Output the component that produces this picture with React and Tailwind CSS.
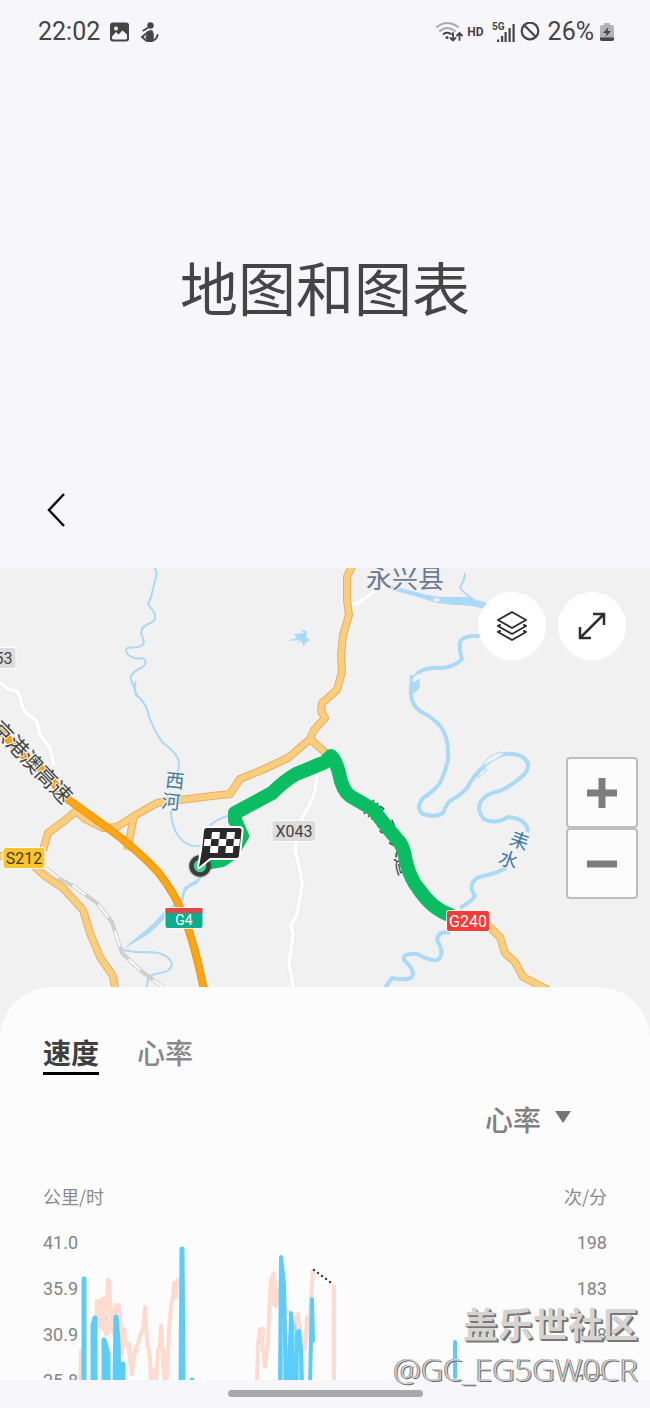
import React, { useState } from 'react';

const SPEED_TICKS = ['41.0', '35.9', '30.9', '25.8'];
const HEART_TICKS = ['198', '183', '168', '153'];

const ROADS = [
  'M353 564 L347 577 L347 600 L349 615 L343 635 L341 655 L342 672 L337 690 L322 703 L321 711 L325 718 L314 730 L310 739 L288 758 L262 770 L240 779 Q234 788 230 794 L212 796 L180 800 L157 803 L134 816 L117 827 L103 828 L85 819 L76 811 L63 822 L48 833 L43 850',
  'M310 739 L328 755',
  'M134 816 L130 837 L127 850',
  'M0 856 L12 856',
  'M34 866 L46 877 L63 888 L83 910 L90 933 L100 957 L113 976 L117 1000',
  'M486 924 L500 937 L505 953 L515 962 L523 977 L560 996',
];

const LANES = [
  'M0 682 L8 689 L17 691 L20 697 L22 706 L27 714 L36 720 L40 735 L50 748 L54 766',
  'M318 772 L314 795 L308 808 L300 822 L295 850 L300 870 L302 885 L297 915 L291 925 L293 935 L289 963 L294 992',
  'M350 605 L358 603 L367 597 L378 588 L386 585',
];

/* Thin streams, drawn with one stroke width */
const STREAMS = [
  'M154 568 Q158 570 156 577 L151 597 L148 604 L154 612 Q158 621 148 624 Q139 628 142 636 Q147 645 138 647 L127 648 Q124 652 130 656 Q136 660 143 658 Q149 663 141 668 Q129 673 131 680 L137 695 Q148 706 149 717 Q154 730 162 742 Q174 751 177 757 Q181 764 177 775',
  'M171 810 Q171 826 179 837 Q187 847 200 846',
  'M208 828 Q216 818 232 815',
  'M123 950 Q136 953 150 952 Q170 953 172 965 Q170 972 160 973 Q148 975 148 980 L146 990',
  'M465 573 Q465 580 460 587 Q462 592 473 599',
];

const RIVERS = [
  'M480 636 Q463 635 460 642 Q459 651 462 659 Q456 666 443 668 Q425 667 418 673 Q411 681 411 692 Q411 705 420 711 Q436 719 443 730 Q449 741 448 760 Q445 773 440 783 Q432 793 423 798 Q415 809 423 814 Q436 818 443 813 Q447 803 450 801 Q462 794 467 788 Q474 775 483 767 Q494 756 505 754 Q522 752 528 763 Q529 772 519 779 Q510 786 500 791 Q487 793 481 801 Q476 810 484 819 Q495 825 508 817 Q520 818 524 823 Q529 828 527 832',
  'M506 868 Q495 874 483 876 Q475 877 472 884 Q470 889 475 896 Q472 901 460 908',
  'M450 933 Q438 930 437 940 Q446 955 437 960 Q430 961 417 954 Q402 953 404 960 Q416 971 412 977 Q406 981 392 978 L385 988',
];

function StatusBar() {
  return (
    <div className="flex items-center justify-between h-16 pl-[38px] pr-9 text-[#454545]">
      <div className="flex items-center gap-2.5">
        <span className="font-[Roboto] text-[25px] leading-8">22:02</span>
        <svg className="w-5 h-5" viewBox="0 0 20 20" aria-hidden="true">
          <rect x="0" y="0.500" width="19" height="19" rx="3" fill="currentColor" />
          <circle cx="6" cy="6.500" r="2" fill="#f6f6fb" />
          <path d="M2 14.500 L6 10 L8.500 12.500 L12.500 8.500 L17 12.500 V16 Q17 17.500 15.500 17.500 H3.500 Q2 17.500 2 16 Z" fill="#f6f6fb" />
        </svg>
        <svg className="w-5 h-5" viewBox="0 0 20 20" aria-hidden="true">
          <circle cx="10.500" cy="3.500" r="3.200" fill="currentColor" />
          <path d="M7.500 9.500 Q10 7 12.500 8.500 Q14.500 12 13.500 18 Q10 20 6.500 18 L5.500 15.500 Z" fill="currentColor" />
          <path d="M8 10 L2 15 L6 18.500 Q10 20 13 18.500 Q17 17 17.500 13 M3.500 8.500 L7.500 6" fill="none" stroke="currentColor" strokeWidth="2" strokeLinecap="round" />
        </svg>
      </div>

      <div className="flex items-center">
        <svg className="w-7 h-6" viewBox="0 0 28 24" fill="none" strokeLinecap="round" aria-hidden="true">
          <path d="M2 7 Q12 -1 23 7" stroke="#a9a9ad" strokeWidth="2" />
          <path d="M5 11 Q12 5 20 11" stroke="#a9a9ad" strokeWidth="2" />
          <path d="M8.500 14 Q12 11.500 16 14" stroke="currentColor" strokeWidth="2" />
          <circle cx="12" cy="17.500" r="1.500" fill="currentColor" />
          <path d="M18 13 V20 M15.500 18 L18 20.500 L20.500 18 M24.500 20 V13 M22 15.500 L24.500 13 L27 15.500" stroke="currentColor" strokeWidth="1.800" />
        </svg>
        <span className="ml-1 font-[Roboto] text-xs font-bold">HD</span>
        <svg className="w-6 h-6 ml-2" viewBox="0 0 24 24" fill="currentColor" aria-hidden="true">
          <text x="0" y="10" fontFamily="Roboto" fontSize="10" fontWeight="700">5G</text>
          <path d="M5 19.500h2.200v2.500h-2.200z M9 16h2.200v6h-2.200z M12.500 12h2.200v10h-2.200z M16.500 8h2.200v14h-2.200z M20.500 4h2.200v18h-2.200z" />
        </svg>
        <svg className="w-5 h-5 ml-1" viewBox="0 0 20 20" fill="none" stroke="currentColor" strokeWidth="2.200" aria-hidden="true">
          <circle cx="10" cy="9" r="8.300" />
          <path d="M4 3 L16 15" />
        </svg>
        <span className="ml-2 font-[Roboto] text-[25px] leading-8">26%</span>
        <svg className="w-3.5 h-5 ml-1.5" viewBox="0 0 14 20" aria-hidden="true">
          <path d="M4 1 h6 v2 h2 q2 0 2 2 v12 q0 2 -2 2 h-10 q-2 0 -2 -2 v-12 q0 -2 2 -2 h2z" fill="#b4b4b8" />
          <path d="M0 15.500 h14 v1.500 q0 2 -2 2 h-10 q-2 0 -2 -2z" fill="currentColor" />
          <path d="M8.500 5 L3 11 H6.500 L5.500 15 L11 9 H7.500z" fill="currentColor" />
        </svg>
      </div>
    </div>
  );
}

/* Road number plate, centred on its point */
function Shield({ x, y, w, label, fill, color, cap }) {
  return (
    <g>
      <rect x={x - w / 2 - 1} y={y - 11} width={w + 2} height="22" rx="3" fill="#fff" opacity="0.8" />
      <rect x={x - w / 2} y={y - 10} width={w} height="20" rx="2" fill={fill} />
      {cap && <rect x={x - w / 2} y={y - 10} width={w} height="5" rx="1" fill="#e04848" />}
      <text x={x} y={cap ? y + 7 : y + 6} textAnchor="middle" fontFamily="Roboto" fontSize={cap ? 14 : 16} fill={color}>
        {label}
      </text>
    </g>
  );
}

function MapLabel({ x, y, size, angle = 0, color, children }) {
  return (
    <text
      x={x}
      y={y}
      transform={`rotate(${angle} ${x} ${y})`}
      textAnchor="middle"
      dominantBaseline="central"
      fontSize={size}
      fill={color}
      stroke="#f1f1f1"
      strokeWidth="2"
      paintOrder="stroke"
    >
      {children}
    </text>
  );
}

function FinishFlag() {
  return (
    <g>
      <circle cx="200" cy="866" r="12" fill="#000" opacity="0.15" />
      <circle cx="200" cy="866" r="8.500" fill="#3fd28a" stroke="#3c3c3c" strokeWidth="4.500" />
      <path
        d="M207 828 H239 Q242 828 241.500 831 L239 855 Q239 858 236 858 H210 L199 867 L202 850 L204 831 Q204 828 207 828Z"
        fill="#2a2a2a"
        stroke="#fff"
        strokeWidth="4"
        strokeLinejoin="round"
        paintOrder="stroke"
      />
      <path
        d="M212 832h8l-.7 7h-8z M227 832h8l-.7 7h-8z M204.500 839h6.800l-.7 7h-6.800z M219 839h7.500l-.7 7h-7.500z M234 839h6l-.7 7h-6z M210.500 846h8l-.7 7h-8z M226 846h7.500l-.7 7h-7.500z"
        fill="#fff"
      />
    </g>
  );
}

function RouteMap() {
  return (
    <svg
      className="block w-full h-[468px] bg-[#f1f1f1] font-['Noto_Sans_CJK_SC',sans-serif]"
      viewBox="0 568 650 468"
      preserveAspectRatio="xMidYMid slice"
      fill="none"
      strokeLinejoin="round"
      role="img"
      aria-label="路线"
    >
      {/* Water */}
      {STREAMS.map((d) => <path key={d} d={d} stroke="#abd9f5" strokeWidth="2" />)}
      {RIVERS.map((d) => <path key={d} d={d} stroke="#abd9f8" strokeWidth="4" />)}
      <path d="M136 681 Q133 690 137 697" stroke="#abd9f5" strokeWidth="2" />
      <path d="M376 572 Q381 583 393 586 L420 593 Q434 597 446 597 L468 597 L490 604 V611 Q472 604 455 605 L437 603 L418 597 L392 590 L380 582Z" fill="#abd9f8" />
      <path d="M434 598 L441 599 L438 602 L433 601Z" fill="#f1f1f1" />
      <path d="M410 675 L419 676 L420 687 L415 693 L409 691Z" fill="#abd9f8" />
      <path d="M412 680 Q415 674 420 674 Q420 680 414 682Z" fill="#f1f1f1" />
      <path d="M483 764 Q490 754 501 752 L505 753 Q496 760 484 766Z M478 776 Q481 769 487 769 Q485 774 478 778Z" fill="#f1f1f1" stroke="#abd9f5" />
      <path d="M204 874 L197 884 Q186 888 185 893 L183 903 L166 917 Q155 929 146 936 L123 949 L142 933 Q154 924 162 914 L181 898 L184 887 L196 880Z" fill="#abd9f8" />
      <path d="M286 641 L297 638 L294 634 L304 633 L301 630 L307 631 L306 637 L310 640 L305 643 L304 647 L301 641 L296 644 L300 640Z" fill="#abd9f8" />

      {/* Minor roads */}
      {LANES.map((d) => <path key={d} d={d} stroke="#e3e3e3" strokeWidth="5" />)}
      {LANES.map((d) => <path key={d} d={d} stroke="#fff" strokeWidth="4" />)}

      {/* Railway */}
      <g>
        <path d="M46 868 L58 878 L75 887 L97 903 L112 922 L117 938 L122 953 L140 970 L164 988" stroke="#cfcfcf" strokeWidth="4" />
        <path d="M46 868 L58 878 L75 887 L97 903 L112 922 L117 938 L122 953 L140 970 L164 988" stroke="#fff" strokeWidth="2" strokeDasharray="16 16" />
      </g>

      {/* Main roads */}
      {ROADS.map((d) => <path key={d} d={d} stroke="#e3b161" strokeWidth="8" />)}
      {ROADS.map((d) => <path key={d} d={d} stroke="#fccd7c" strokeWidth="6" />)}
      <path d="M-4 726 L23 755 L42 769 L66 798 Q90 815 105 826 Q138 850 158 872 Q176 895 184 917 Q195 945 205 995" stroke="#e8970c" strokeWidth="8" />
      <path d="M-4 726 L23 755 L42 769 L66 798 Q90 815 105 826 Q138 850 158 872 Q176 895 184 917 Q195 945 205 995" stroke="#fba414" strokeWidth="6" />

      {/* Place names */}
      <MapLabel x={405} y={576} size={26} color="#6b7b93">永兴县</MapLabel>
      <MapLabel x={33} y={761} size={21} angle={46} color="#444">京港澳高速</MapLabel>
      <MapLabel x={175} y={779} size={19} angle={6} color="#3b7ba3">西</MapLabel>
      <MapLabel x={171} y={800} size={19} angle={6} color="#3b7ba3">河</MapLabel>
      <MapLabel x={520} y={839} size={19} angle={20} color="#3b7ba3">耒</MapLabel>
      <MapLabel x={509} y={858} size={19} angle={20} color="#3b7ba3">水</MapLabel>
      <MapLabel x={374} y={809} size={19} angle={35} color="#444">郴</MapLabel>
      <MapLabel x={389} y={827} size={19} angle={50} color="#444">永</MapLabel>
      <MapLabel x={401} y={846} size={19} angle={65} color="#444">大</MapLabel>
      <MapLabel x={405} y={865} size={19} angle={75} color="#444">道</MapLabel>

      {/* Recorded route */}
      <path
        d="M205 863 L222 860 L232 853 L242 836 L235 820 L235 813 L272 793 Q284 781 296 774 Q316 766 325 762 L331 756 Q336 761 339 773 Q342 790 350 796 L374 810 Q383 823 396 838 Q404 845 406 862 Q411 880 418 888 Q432 909 450 915"
        stroke="#0bbd62"
        strokeWidth="14"
        strokeLinecap="round"
      />
      <FinishFlag />

      <Shield x={-6} y={658} w={43} label="X053" fill="#dcdcdc" color="#444" />
      <Shield x={294} y={831} w={43} label="X043" fill="#dcdcdc" color="#444" />
      <Shield x={24} y={858} w={41} label="S212" fill="#f8c530" color="#4a3a10" />
      <Shield x={184} y={918} w={37} label="G4" fill="#0cac8d" color="#fff" cap />
      <Shield x={468} y={921} w={42} label="G240" fill="#f33b37" color="#fff" />
    </svg>
  );
}

function SpeedChart() {
  return (
    <svg className="flex-1 min-w-0 h-40" viewBox="78 1221 497 160" preserveAspectRatio="none" fill="none" strokeLinecap="round" strokeLinejoin="round" role="img" aria-label="速度">
      {/* Heart rate */}
      <g stroke="#fddccf" strokeWidth="4">
        <path d="M80 1384 L81 1352 M92 1345 L96 1325 L97 1302 L99 1302 L100 1328 L102 1328 L104 1299 L106 1335 L108 1281 L109 1281 L110 1300 L112 1325 L114 1335 L116 1306 L119 1306 L121 1330 L122 1355 L124 1330 L126 1345 L129 1345 L132 1375 L135 1350 L138 1345 L140 1337 L143 1330 L145 1308 L147 1340 L150 1360 L151 1384 H156 L158 1352 L160 1345 L161 1327 L163 1365 L165 1384 H167 L169 1330 L171 1308 L173 1298 L174 1284 L176 1298 L177 1281" />
        <path d="M102 1300 L103 1330 L106 1300 L107 1335 L110 1330 L113 1310 L117 1340 M128 1346 L131 1368 L133 1355 L137 1352 M153 1370 V1384 M163 1350 L165 1375" />
        <path d="M257 1384 L258 1345 L260 1330 L263 1330 L262 1344 L265 1368 L268 1345 L270 1295 L271 1281 L274 1274 L276 1307 L279 1290 L285 1310 L290 1315 L294 1318 L295 1330 L298 1315 L300 1330 L303 1345 L305 1350 L307 1318 L309 1332 L311 1300 L313 1272 M273 1280 L274 1305 M334 1384 V1287" />
      </g>

      {/* Speed */}
      <path d="M280 1381 L281 1300 L284 1284 L287 1350 L291 1314 L298 1332 L301 1381Z" fill="#5fcefb" fillOpacity="0.6" />
      <g stroke="#5cccf9" strokeWidth="5">
        <path d="M84 1384 V1280 M93 1384 V1326 L95 1319 V1384 M104 1384 V1341 L108 1355 V1384 M106 1384 V1355 M115 1384 L116 1318 L118 1342 L119 1384 M121 1384 L123 1365 V1384" />
        <path d="M181 1384 L182 1250 L183 1384 M192 1381 V1381" />
        <path d="M280 1384 L281 1258 L284 1285 L286 1384 M289 1384 L291 1314 L293 1384 M296 1384 L297 1335 L299 1332 L301 1350 L302 1384 M310 1384 L312 1300 L313 1342" strokeWidth="4" />
        <path d="M455 1343 V1378" strokeWidth="4" />
      </g>

      {/* Recording gap */}
      <path d="M314 1271 L334 1286" stroke="#444" strokeWidth="2.500" strokeDasharray="0 5" />
    </svg>
  );
}

export default function App() {
  const [tab, setTab] = useState('速度');

  return (
    <div className="relative w-full overflow-hidden bg-[#f6f6fb] font-['Noto_Sans_CJK_SC',sans-serif]">
      <StatusBar />

      <header className="flex flex-col">
        <h1 className="pt-[180px] pb-40 text-center text-[58px] leading-[84px] text-[#454545]">地图和图表</h1>
        <button type="button" aria-label="返回" className="self-start mb-9 ml-9 p-1">
          <svg className="w-8 h-9" viewBox="0 0 32 36" fill="none" stroke="#111" strokeWidth="2.500" aria-hidden="true">
            <path d="M24 2 L9 18 L24 34" />
          </svg>
        </button>
      </header>

      <section className="relative">
        <RouteMap />
        <div className="absolute top-6 right-6 flex gap-3">
          <button type="button" aria-label="图层" className="flex items-center justify-center w-17 h-17 rounded-full bg-white">
            <svg className="w-8 h-8" viewBox="0 0 32 32" fill="none" stroke="#2f2f2f" strokeWidth="2" strokeLinejoin="round" strokeLinecap="round" aria-hidden="true">
              <path d="M16 2 L30 10 L16 18 L2 10Z" />
              <path d="M4 15 L2 16 L16 24 L30 16 L28 15" />
              <path d="M4 21 L2 22 L16 30 L30 22 L28 21" />
            </svg>
          </button>
          <button type="button" aria-label="全屏" className="flex items-center justify-center w-17 h-17 rounded-full bg-white">
            <svg className="w-7 h-7" viewBox="0 0 28 28" fill="none" stroke="#2f2f2f" strokeWidth="2.500" aria-hidden="true">
              <path d="M2 26 L26 2 M15 2 H26 V13 M2 15 V26 H13" />
            </svg>
          </button>
        </div>
        <div className="absolute top-[189px] right-3 flex flex-col">
          <button type="button" aria-label="放大" className="flex items-center justify-center w-[72px] h-[71px] rounded border-2 border-[#bdbdbd] bg-[#fcfcfc]">
            <svg className="w-[30px] h-[30px]" viewBox="0 0 30 30" fill="#7d7d7d" aria-hidden="true">
              <path d="M11.500 0h7v11.500h11.500v7h-11.500v11.500h-7v-11.500h-11.500v-7h11.500z" />
            </svg>
          </button>
          <button type="button" aria-label="缩小" className="flex items-center justify-center w-[72px] h-[71px] rounded border-2 border-[#bdbdbd] bg-[#fcfcfc]">
            <svg className="w-[30px] h-[30px]" viewBox="0 0 30 30" fill="#7d7d7d" aria-hidden="true">
              <rect y="11.500" width="30" height="7" />
            </svg>
          </button>
        </div>
      </section>

      <main className="relative -mt-[49px] rounded-t-[52px] bg-[#fcfcfc] px-[43px] pt-[45px]">
        <div role="tablist" className="flex gap-[38px] text-[28px] leading-10">
          {['速度', '心率'].map((name) => (
            <button
              key={name}
              type="button"
              role="tab"
              aria-selected={tab === name}
              onClick={() => setTab(name)}
              className={
                tab === name
                  ? 'border-b-[3px] border-black font-bold text-[#3f3f3f]'
                  : 'border-b-[3px] border-transparent font-medium text-[#888]'
              }
            >
              {name}
            </button>
          ))}
        </div>

        <div className="flex justify-end items-center mt-6 pr-9">
          <label htmlFor="overlay" className="sr-only">叠加数据</label>
          <select id="overlay" className="w-[70px] appearance-none bg-transparent text-[28px] font-medium leading-10 text-[#808080]">
            <option>心率</option>
          </select>
          <svg className="w-4 h-3 -mt-1" viewBox="0 0 16 12" fill="#757575" aria-hidden="true">
            <path d="M0 0 H16 L8 12Z" />
          </svg>
        </div>

        <div className="flex justify-between mt-[45px] text-[18px] leading-6 text-[#8a8a8a]">
          <span>公里/时</span>
          <span>次/分</span>
        </div>

        <div className="flex h-40 mt-3 overflow-hidden font-[Roboto] text-[18px] leading-[46px] text-[#858585]">
          <div className="w-[35px]">
            {SPEED_TICKS.map((t) => <div key={t}>{t}</div>)}
          </div>
          <SpeedChart />
          <div className="w-8 text-right">
            {HEART_TICKS.map((t) => <div key={t}>{t}</div>)}
          </div>
        </div>
      </main>

      <footer className="flex justify-center h-7 pt-2.5">
        <div className="w-[195px] h-[7px] rounded-full bg-[#a9a9a9]" />
      </footer>

      {/* Community watermark */}
      <div className="absolute right-3 bottom-4 text-right pointer-events-none">
        <p className="text-[35px] font-bold leading-[46px] text-[#d6d3d1] [text-shadow:1px_1px_0_#777,2px_2px_0_#777]">盖乐世社区</p>
        <p className="font-['Open_Sans'] text-[31px] font-light leading-[46px] text-[#d0d0d0] [text-shadow:1px_1px_0_#666,-1px_0_0_#888]">@GC_EG5GW0CR</p>
      </div>
    </div>
  );
}
